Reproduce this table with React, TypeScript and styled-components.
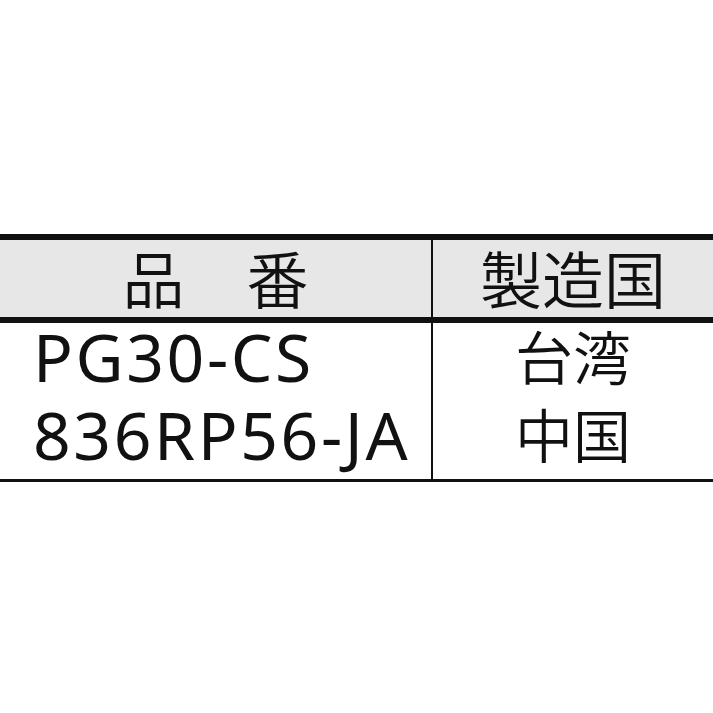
import styled, { createGlobalStyle } from "styled-components";

const GlobalStyle = createGlobalStyle`
  html, body {
    margin: 0;
    padding: 0;
    background: #fff;
  }
  body {
    font-family: "Noto Sans", "Noto Sans CJK JP", sans-serif;
    color: #111;
  }
`;

const rows = [
  { part: "PG30-CS", origin: "台湾" },
  { part: "836RP56-JA", origin: "中国" },
];

export default function App() {
  return (
    <>
      <GlobalStyle />
      <Page>
        <Table>
          <colgroup>
            <col style={{ width: 432 }} />
            <col />
          </colgroup>
          <thead>
            <tr>
              <HeadCell>品　番</HeadCell>
              <HeadCell $divider>製造国</HeadCell>
            </tr>
          </thead>
          <tbody>
            {rows.map((row, i) => (
              <tr key={row.part}>
                <PartCell $last={i === rows.length - 1}>{row.part}</PartCell>
                <OriginCell $last={i === rows.length - 1}>{row.origin}</OriginCell>
              </tr>
            ))}
          </tbody>
        </Table>
      </Page>
    </>
  );
}

const Page = styled.div`
  padding-top: 234px;
  width: 713px;
`;

const Table = styled.table`
  width: 100%;
  border-collapse: collapse;
  table-layout: fixed;
`;

const HeadCell = styled.th<{ $divider?: boolean }>`
  box-sizing: border-box;
  height: 83px;
  padding: 0 0 4px;
  background: #e7e7e7;
  border-top: 6px solid #111;
  border-bottom: 6px solid #111;
  border-left: ${(p) => (p.$divider ? "2px solid #111" : "none")};
  font-family: "Noto Sans CJK JP", sans-serif;
  font-weight: 350;
  font-size: 62px;
  line-height: 1;
  text-align: center;
  vertical-align: middle;
`;

const BodyCell = styled.td<{ $last?: boolean }>`
  box-sizing: border-box;
  height: 78px;
  border-bottom: ${(p) => (p.$last ? "3px solid #111" : "none")};
  line-height: 1;
  vertical-align: middle;
  white-space: nowrap;
`;

const PartCell = styled(BodyCell)`
  padding: 0 0 12px 33px;
  font-family: "Noto Sans", sans-serif;
  font-weight: 400;
  font-size: 66px;
  letter-spacing: 2.6px;
  text-align: left;
`;

const OriginCell = styled(BodyCell)`
  padding: 0 0 14px;
  border-left: 2px solid #111;
  font-family: "Noto Sans CJK JP", sans-serif;
  font-weight: 350;
  font-size: 58px;
  text-align: center;
`;
